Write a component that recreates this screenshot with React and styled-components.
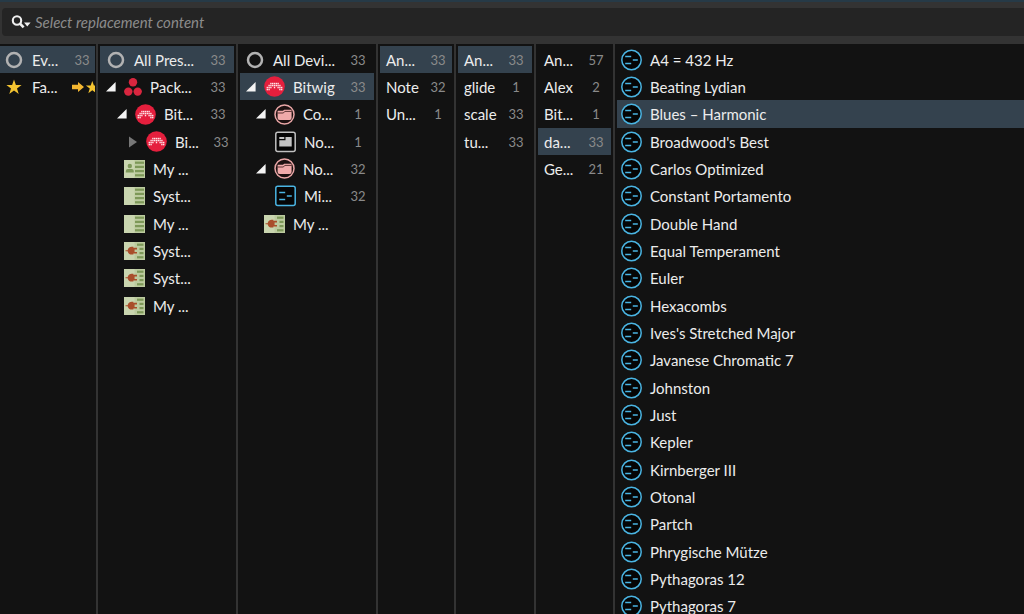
import React, { useState } from 'react';
import styled, { createGlobalStyle, css } from 'styled-components';

const GlobalStyle = createGlobalStyle`
  * {
    box-sizing: border-box;
  }
  body {
    margin: 0;
    background: #121212;
    color: #ececec;
    font-family: Lato, "Open Sans", sans-serif;
    font-size: 15px;
  }
  svg {
    flex: none;
  }
`;

const Browser = styled.main`
  display: flex;
  flex-direction: column;
  height: 100vh;
  overflow: hidden;
`;

const Toolbar = styled.header`
  flex: none;
  padding: 6px 0 8px 2px;
  border-top: 2px solid #263a47;
  background: #333333;
`;

const SearchBox = styled.div`
  display: flex;
  align-items: center;
  gap: 4px;
  height: 28px;
  padding-left: 9px;
  border-radius: 4px 0 0 4px;
  background: #242424;
`;

const SearchMode = styled.button`
  display: flex;
  padding: 0;
  border: 0;
  background: none;
`;

const SearchInput = styled.input`
  flex: 1;
  min-width: 0;
  padding: 0;
  border: 0;
  outline: 0;
  background: none;
  color: #ececec;
  font: inherit;
  &::placeholder {
    color: #8c8c8c;
    font-style: italic;
    opacity: 1;
  }
`;

const Columns = styled.div`
  flex: 1;
  min-height: 0;
  display: grid;
  grid-template-columns: 98px 140px 140px 78px 80px 79px minmax(0, 1fr);
`;

const Column = styled.ul`
  margin: 0;
  padding: ${props => (props.$first ? '2px 1px 0 0' : '2px 2px 0')};
  overflow: hidden;
  list-style: none;
  border-right: 2px solid #333333;
  &:last-child {
    padding-right: 0;
    border-right: 0;
  }
`;

const Item = styled.li`
  height: 27px;
  &:nth-child(3n) {
    height: 28px;
  }
`;

const RowButton = styled.button`
  display: flex;
  align-items: center;
  width: 100%;
  height: 100%;
  padding: 0 ${props => props.$tail}px 0 ${props => props.$indent}px;
  border: 0;
  overflow: hidden;
  background: none;
  color: inherit;
  font: inherit;
  text-align: left;
  white-space: nowrap;
  ${props => props.$selected && css`
    background: #34424e;
  `}
`;

const ArrowSlot = styled.span`
  flex: none;
  display: flex;
  width: 18px;
`;

const IconSlot = styled.span`
  flex: none;
  display: flex;
  margin-right: 8px;
`;

const Label = styled.span`
  flex: 1;
`;

const Count = styled.span`
  flex: none;
  width: 18px;
  color: #8a8a8a;
  font-size: 13px;
  text-align: center;
`;

const Shortcut = styled.span`
  flex: none;
  display: flex;
  width: 24px;
  overflow: hidden;
`;

const STAR = 'M8 0.5 L9.9 6 H15.6 L11 9.4 L12.7 15 L8 11.6 L3.3 15 L5 9.4 L0.4 6 H6.1 Z';

const SearchIcon = () => (
  <svg width="20" height="16" viewBox="0 0 20 16">
    <circle cx="6" cy="6.5" r="4.2" fill="none" stroke="#f0f0f0" strokeWidth="2.1" />
    <path d="M8.8 9.4 L12.6 13.4" stroke="#f0f0f0" strokeWidth="2.6" />
    <path d="M13 8.5 H19.6 L16.3 12.6 Z" fill="#f0f0f0" />
  </svg>
);

const ArrowIcon = ({ open }) => (
  <svg width="10" height="12" viewBox="0 0 10 12">
    {open
      ? <path d="M9.6 1 V10.6 H0 Z" fill="#f4f4f4" />
      : <path d="M1 0.5 L9 6 L1 11.5 Z" fill="#777777" />}
  </svg>
);

const RingIcon = () => (
  <svg width="20" height="20" viewBox="0 0 20 20">
    <circle cx="10" cy="10" r="7" fill="none" stroke="#b2b2b2" strokeWidth="2.5" />
  </svg>
);

const StarIcon = () => (
  <svg width="20" height="20" viewBox="-2 -2 20 20">
    <path d={STAR} fill="#f4c431" />
  </svg>
);

const ShortcutIcon = () => (
  <svg width="30" height="14" viewBox="0 0 30 14">
    <path d="M1 4.8 H7 V2 L13 7 L7 12 V9.2 H1 Z" fill="#f4b731" />
    <path d={STAR} transform="translate(14.5 0.5) scale(0.85)" fill="#f4c431" />
  </svg>
);

const PackagesIcon = () => (
  <svg width="18" height="20" viewBox="0 0 18 20">
    <circle cx="9" cy="5.2" r="4.2" fill="#d9263f" />
    <circle cx="4.3" cy="14.6" r="4.2" fill="#d9263f" />
    <circle cx="13.7" cy="14.6" r="4.2" fill="#d9263f" />
  </svg>
);

// [column, row] of every dot in the arch
const DOTS = [
  [2, 0], [3, 0], [4, 0], [5, 0], [6, 0],
  [1, 1], [2, 1], [3, 1], [4, 1], [5, 1], [6, 1], [7, 1],
  [0, 2], [1, 2], [2, 2], [4, 2], [6, 2], [7, 2], [8, 2],
  [0, 3], [1, 3], [7, 3], [8, 3],
];

const BitwigIcon = () => (
  <svg width="21" height="21" viewBox="0 0 21 21">
    <circle cx="10.5" cy="10.5" r="10.3" fill="#e51f3d" />
    {DOTS.map(([x, y]) => (
      <rect key={`${x}-${y}`} x={2.6 + x * 1.8} y={6.8 + y * 2} width="1.4" height="1.5" fill="#ffe3e6" />
    ))}
  </svg>
);

const PanelIcon = ({ type }) => (
  <svg width="21" height="20" viewBox="0 0 21 20">
    <rect y="1" width="21" height="18" fill="#bccb9f" />
    <rect y="1" width="10.5" height="18" fill="#c9d5af" />
    {type === 'plug' ? (
      <>
        <g fill="#7d9858">
          <rect x="13" y="2.6" width="6.5" height="2.2" />
          <rect x="15.5" y="6.8" width="4" height="2.2" />
          <rect x="15.5" y="11" width="4" height="2.2" />
          <rect x="13" y="15.2" width="6.5" height="2.2" />
        </g>
        <path d="M1.5 9.2 H3.6 C4.4 6.6 6 5.8 7.5 5.8 H9.4 V6.8 H13 V8.4 H10.6 V11 H13 V12.6 H9.4 V13.6 H7.5 C6 13.6 4.4 12.8 3.6 10.2 H1.5 Z" fill="#a94e2b" />
      </>
    ) : (
      <g fill="#7d9858">
        <rect x="11" y="2.6" width="9" height="2.2" />
        <rect x="11" y="6.8" width="9" height="2.2" />
        <rect x="11" y="11" width="9" height="2.2" />
        <rect x="11" y="15.2" width="9" height="2.2" />
      </g>
    )}
    {type === 'user' && (
      <g fill="#7d9858">
        <circle cx="5.8" cy="7" r="2.2" />
        <path d="M1.8 13.6 V12 Q1.8 10 4 10 H7.6 Q9.8 10 9.8 12 V13.6 Z" />
      </g>
    )}
  </svg>
);

const FolderIcon = () => (
  <svg width="21" height="21" viewBox="0 0 21 21">
    <circle cx="10.5" cy="10.5" r="9.5" fill="#1c1010" stroke="#e9a6a6" strokeWidth="1.5" />
    <path d="M3.6 6.8 H9 L10.2 5.8 H16.6 Q17.6 5.8 17.6 6.8 V14 Q17.6 16 15.6 16 H5.6 Q3.6 16 3.6 14 Z" fill="#f0aaaa" />
    <path d="M3.4 9 H9.4 L10.8 7.4 H17.8" fill="none" stroke="#4a2424" strokeWidth="0.9" />
  </svg>
);

const ContainerIcon = () => (
  <svg width="22" height="22" viewBox="0 0 22 22">
    <rect x="1.8" y="1.2" width="19.4" height="19.4" rx="2" fill="#050505" stroke="#c0c0c0" strokeWidth="1.5" />
    <path d="M5.3 6 H10.3 V8 H5.3 Z M11.5 6 H17.7 V15.6 H5.3 V9.2 H11.5 Z" fill="#c4c4c4" />
  </svg>
);

const NoteFxIcon = ({ square }) => (
  <svg width={square ? 22 : 21} height="22" viewBox={square ? '-1 0 22 22' : '0 0 21 22'}>
    {square
      ? <rect x="0.8" y="1.2" width="19.4" height="19.4" rx="2" fill="#050505" stroke="#4ab4e2" strokeWidth="1.5" />
      : <circle cx="10.5" cy="11" r="9.7" fill="#050505" stroke="#4ab4e2" strokeWidth="1.5" />}
    <path d="M4.2 7.5 H10.2 M11.8 11 H16.8 M4.2 14.5 H10.2" stroke="#4ab4e2" strokeWidth="1.6" />
  </svg>
);

const icons = {
  ring: <RingIcon />,
  star: <StarIcon />,
  packages: <PackagesIcon />,
  bitwig: <BitwigIcon />,
  user: <PanelIcon type="user" />,
  panel: <PanelIcon type="panel" />,
  plug: <PanelIcon type="plug" />,
  folder: <FolderIcon />,
  container: <ContainerIcon />,
  noteFxDevice: <NoteFxIcon square />,
  noteFx: <NoteFxIcon />,
};

const presets = [
  'A4 = 432 Hz', 'Beating Lydian', 'Blues – Harmonic', "Broadwood's Best", 'Carlos Optimized',
  'Constant Portamento', 'Double Hand', 'Equal Temperament', 'Euler', 'Hexacombs',
  "Ives's Stretched Major", 'Javanese Chromatic 7', 'Johnston', 'Just', 'Kepler',
  'Kirnberger III', 'Otonal', 'Partch', 'Phrygische Mütze', 'Pythagoras 12', 'Pythagoras 7',
];

const columns = [
  {
    name: 'Collections',
    tail: 4,
    selected: 0,
    rows: [
      { indent: 4, icon: 'ring', label: 'Ev...', count: 33 },
      { indent: 4, icon: 'star', label: 'Fa...', shortcut: true, tail: 0 },
    ],
  },
  {
    name: 'Locations',
    tail: 7,
    selected: 0,
    rows: [
      { indent: 6, icon: 'ring', label: 'All Pres...', count: 33 },
      { indent: 6, arrow: 'open', icon: 'packages', label: 'Pack...', count: 33 },
      { indent: 17, arrow: 'open', icon: 'bitwig', label: 'Bit...', count: 33 },
      { indent: 28, arrow: 'closed', icon: 'bitwig', label: 'Bi...', count: 33, tail: 4 },
      { indent: 6, arrow: 'none', icon: 'user', label: 'My ...' },
      { indent: 6, arrow: 'none', icon: 'panel', label: 'Syst...' },
      { indent: 6, arrow: 'none', icon: 'panel', label: 'My ...' },
      { indent: 6, arrow: 'none', icon: 'plug', label: 'Syst...' },
      { indent: 6, arrow: 'none', icon: 'plug', label: 'Syst...' },
      { indent: 6, arrow: 'none', icon: 'plug', label: 'My ...' },
    ],
  },
  {
    name: 'Devices',
    tail: 7,
    selected: 1,
    rows: [
      { indent: 5, icon: 'ring', label: 'All Devi...', count: 33 },
      { indent: 6, arrow: 'open', icon: 'bitwig', label: 'Bitwig', count: 33 },
      { indent: 16, arrow: 'open', icon: 'folder', label: 'Co...', count: 1 },
      { indent: 16, arrow: 'none', icon: 'container', label: 'No...', count: 1 },
      { indent: 16, arrow: 'open', icon: 'folder', label: 'No...', count: 32 },
      { indent: 16, arrow: 'none', icon: 'noteFxDevice', label: 'Mi...', count: 32 },
      { indent: 6, arrow: 'none', icon: 'plug', label: 'My ...' },
    ],
  },
  {
    name: 'Categories',
    tail: 5,
    selected: 0,
    rows: [
      { indent: 6, label: 'An...', count: 33 },
      { indent: 6, label: 'Note', count: 32 },
      { indent: 6, label: 'Un...', count: 1 },
    ],
  },
  {
    name: 'Tags',
    tail: 7,
    selected: 0,
    rows: [
      { indent: 6, label: 'An...', count: 33 },
      { indent: 6, label: 'glide', count: 1 },
      { indent: 6, label: 'scale', count: 33 },
      { indent: 6, label: 'tu...', count: 33 },
    ],
  },
  {
    name: 'Creators',
    tail: 6,
    selected: 3,
    rows: [
      { indent: 6, label: 'An...', count: 57 },
      { indent: 6, label: 'Alex', count: 2 },
      { indent: 6, label: 'Bit...', count: 1 },
      { indent: 6, label: 'da...', count: 33 },
      { indent: 6, label: 'Ge...', count: 21 },
    ],
  },
  {
    name: 'Results',
    tail: 0,
    selected: 2,
    rows: presets.map(label => ({ indent: 4, icon: 'noteFx', label })),
  },
];

const BrowserColumn = ({ column, first }) => {
  const [selected, setSelected] = useState(column.selected);

  return (
    <Column $first={first} aria-label={column.name}>
      {column.rows.map((row, index) => (
        <Item key={index}>
          <RowButton
            type="button"
            $indent={row.indent}
            $tail={row.tail ?? column.tail}
            $selected={index === selected}
            aria-pressed={index === selected}
            onClick={() => setSelected(index)}
          >
            {row.arrow && (
              <ArrowSlot>
                {row.arrow !== 'none' && <ArrowIcon open={row.arrow === 'open'} />}
              </ArrowSlot>
            )}
            {row.icon && <IconSlot>{icons[row.icon]}</IconSlot>}
            <Label>{row.label}</Label>
            {row.count && <Count>{row.count}</Count>}
            {row.shortcut && <Shortcut><ShortcutIcon /></Shortcut>}
          </RowButton>
        </Item>
      ))}
    </Column>
  );
};

export default function App() {
  return (
    <Browser>
      <GlobalStyle />
      <Toolbar>
        <SearchBox>
          <SearchMode type="button" aria-label="Search options">
            <SearchIcon />
          </SearchMode>
          <SearchInput
            type="text"
            aria-label="Select replacement content"
            placeholder="Select replacement content"
          />
        </SearchBox>
      </Toolbar>
      <Columns>
        {columns.map((column, index) => (
          <BrowserColumn key={column.name} column={column} first={index === 0} />
        ))}
      </Columns>
    </Browser>
  );
}
